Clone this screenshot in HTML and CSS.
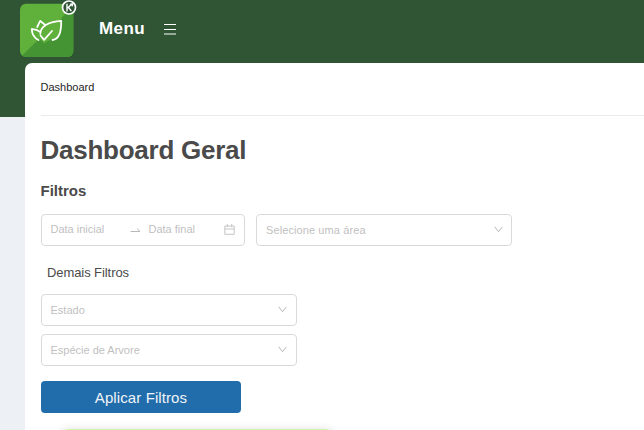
FILE: index.html
```html
<!DOCTYPE html>
<html lang="pt-BR">
<head>
<meta charset="utf-8">
<title>Dashboard</title>
<link rel="stylesheet" href="styles.css">
</head>
<body>
<header class="header">
  <svg class="logo" width="58" height="60" viewBox="0 0 58 60">
    <defs><clipPath id="tile"><rect x="1" y="3.7" width="53.3" height="53.3" rx="6"/></clipPath></defs>
    <g clip-path="url(#tile)">
      <rect width="58" height="60" fill="#5fb13c"/>
      <path d="M0 58.5L22 37l3 6.500 2-1.500L44 16 58 4v56H0z" fill="#449433"/>
      <path d="M21 32c1-6 9-11 21-11.500 0 9-2 18-9 18.500l-8 4-5-5z" fill="#5fb13c"/>
    </g>
    <g fill="none" stroke="#fff" stroke-width="1.800" stroke-linecap="round" stroke-linejoin="round">
      <path d="M19.500 40C14.500 37.500 13 34 12.700 29.200c3.300-.2 6.200.9 8.300 2.700M18.200 27l3-6.100 5.300 4.300M21.300 33.500c.3-7 8.500-12 20.900-12.700.2 10-1.800 18.500-8.700 19.200M21.500 35.500l3.600 4.300L33 31"/>
    </g>
    <circle cx="50" cy="7.500" r="6.500" fill="#2f5535" stroke="#fff" stroke-width="1.700"/>
    <path d="M48 3.700v7.700M52.500 4.200L48.700 8M49.500 7.500l2.900 3.600M51 4.500l2.700-.6-.7 2.500" fill="none" stroke="#fff" stroke-width="1.400"/>
  </svg>
  <span class="menu">Menu</span>
  <svg class="burger" width="12" height="12" viewBox="0 0 12 12"><path d="M0 1.500h12M0 6.500h12M0 11h12" stroke="#fff" stroke-width="1.100"/></svg>
</header>
<main class="panel">
  <div class="crumb"><span>Dashboard</span></div>
  <h1 class="title">Dashboard Geral</h1>
  <h2 class="subtitle">Filtros</h2>
  <div class="row">
    <div class="field range">
      <span class="start">Data inicial</span>
      <svg class="arrow" width="11" height="6" viewBox="0 0 11 6"><path d="M.5 4.500h9.500L6.900 1.600" fill="none" stroke="#b8b8b8"/></svg>
      <span class="end">Data final</span>
      <svg class="calendar" width="11" height="11" viewBox="0 0 11 11"><path d="M.8 2h9.400v8.300H.8zM.8 5h9.400M3.300 0v3.200M7.700 0v3.200" fill="none" stroke="#bfbfbf" stroke-width=".9"/></svg>
    </div>
    <div class="field select area"><span>Selecione uma área</span><svg width="9" height="7" viewBox="0 0 9 7"><path d="M.7.8l3.800 5 3.800-5" fill="none" stroke="#b8b8b8"/></svg></div>
  </div>
  <div class="more">Demais Filtros</div>
  <div class="stack">
    <div class="field select"><span>Estado</span><svg width="9" height="7" viewBox="0 0 9 7"><path d="M.7.8l3.800 5 3.800-5" fill="none" stroke="#b8b8b8"/></svg></div>
    <div class="field select"><span>Espécie de Arvore</span><svg width="9" height="7" viewBox="0 0 9 7"><path d="M.7.8l3.800 5 3.800-5" fill="none" stroke="#b8b8b8"/></svg></div>
  </div>
  <button class="apply">Aplicar Filtros</button>
  <div class="card"></div>
</main>
</body>
</html>
```
FILE: styles.css
```css
* { box-sizing: border-box; }
html, body { height: 100%; }
body {
  margin: 0;
  overflow: hidden;
  font-family: "Liberation Sans", Arial, sans-serif;
  font-size: 11px;
  color: #4a4a4a;
  background: linear-gradient(#2f5535 117px, #edf1f5 117px);
}
.header { display: flex; height: 63px; padding-left: 19px; color: #fff; }
.logo { flex: none; }
.menu { margin: 19px 0 0 22px; font-size: 17px; line-height: 20px; font-weight: bold; width: 65px; letter-spacing: .4px; }
.burger { margin-top: 23px; }
.panel {
  height: 367px;
  margin-left: 25px;
  padding-left: 16px;
  background: #fff;
  border-top-left-radius: 7px;
  overflow: hidden;
}
.crumb { height: 53px; padding-top: 17px; line-height: 14px; color: #262626; border-bottom: 1px solid #ebebeb; }
.crumb span { margin-left: -.5px; }
.title { margin: 19px 0 0 -.5px; font-size: 26px; line-height: 30px; letter-spacing: -.25px; }
.subtitle { margin: 17px 0 0 -.5px; font-size: 15px; line-height: 18px; }
.row { display: flex; gap: 11px; margin-top: 14px; }
.field {
  display: flex;
  align-items: center;
  height: 32px;
  padding: 0 9px;
  border: 1px solid #d9d9d9;
  border-radius: 4px;
  color: #bfbfbf;
}
.range { width: 204px; padding: 0 9px 2px 8.5px; }
.start { width: 79.5px; }
.arrow { margin-top: 1px; }
.end { margin-left: 7.5px; flex: 1; }
.calendar { margin-top: 1px; }
.select { width: 256px; justify-content: space-between; padding-left: 8.5px; }
.area { padding-left: 9px; padding-right: 8px; }
.area span { letter-spacing: .1px; }
.select svg { margin-top: -1px; }
.more { margin: 19px 0 0 6px; font-size: 13px; line-height: 16px; letter-spacing: -.08px; }
.stack { display: grid; gap: 8px; margin-top: 13px; }
.apply {
  display: block;
  width: 200px;
  height: 32px;
  margin-top: 15px;
  padding: 0;
  border: 0;
  border-radius: 4px;
  background: #216dab;
  color: #f0f4f8;
  font: 15px/33px "Liberation Sans", Arial, sans-serif;
  letter-spacing: .1px;
}
.card {
  width: 274px;
  height: 80px;
  margin: 16px 0 0 19px;
  border: 1px solid #d3f5a9;
  border-radius: 8px;
  box-shadow: 0 0 8px rgba(0, 0, 0, .12);
}
```
